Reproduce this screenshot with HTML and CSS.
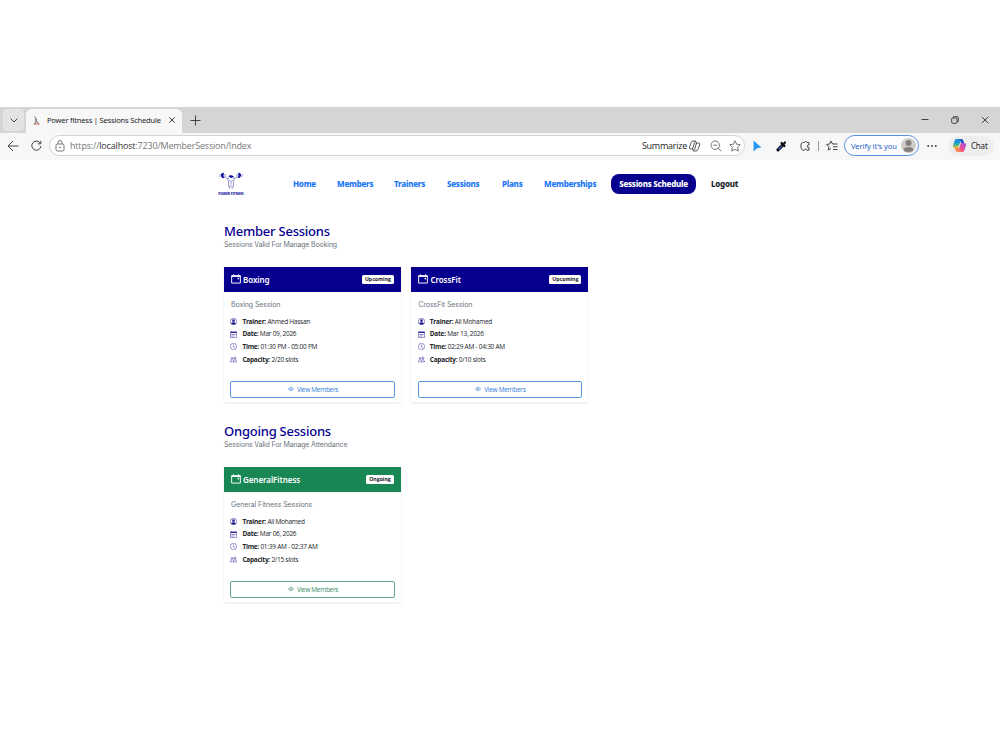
FILE: index.html
```html
<!DOCTYPE html>
<html lang="en">
<head>
  <meta charset="UTF-8">
  <title>Power fitness | Sessions Schedule</title>
  <link rel="stylesheet" href="styles.css">
</head>
<body>

<!-- Shared icons -->
<svg class="sprite" xmlns="http://www.w3.org/2000/svg">
  <symbol id="i-event" viewBox="0 0 16 16"><path d="M1 2.500h14v12H1zM1 4h14M4 .5v2M12 .5v2" fill="none" stroke="currentColor" stroke-width="1.500"/><path d="M10.500 6h2.500v2.500h-2.500z" fill="currentColor"/></symbol>
  <symbol id="i-person" viewBox="0 0 16 16"><circle cx="8" cy="8" r="7.300" fill="none" stroke="currentColor" stroke-width="1.200"/><circle cx="8" cy="6" r="3" fill="currentColor"/><path d="M2.500 13c1-2.500 3-3.500 5.500-3.500s4.500 1 5.500 3.500A8 8 0 0 1 2.500 13z" fill="currentColor"/></symbol>
  <symbol id="i-date" viewBox="0 0 16 16"><path d="M1 2h14v13H1zM4 0v2M12 0v2M3 8h10M3 11.500h7" fill="none" stroke="currentColor" stroke-width="1.200"/><path d="M1 2h14v2.500H1z" fill="currentColor"/></symbol>
  <symbol id="i-clock" viewBox="0 0 16 16"><path d="M8 3.500V9l3.500 2" fill="none" stroke="currentColor" stroke-width="1.100"/><circle cx="8" cy="8" r="7.200" fill="none" stroke="currentColor" stroke-width="1.100"/></symbol>
  <symbol id="i-people" viewBox="0 0 16 16"><g fill="none" stroke="currentColor" stroke-width="1.200"><circle cx="11" cy="5" r="2.500"/><circle cx="4.500" cy="5.500" r="2"/><path d="M7 13.500c0-3 1.500-4.500 4-4.500s4 1.500 4 4.500zM5.500 13.500H1c0-3 1-4.500 4.500-4.500"/></g></symbol>
  <symbol id="i-eye" viewBox="0 0 16 16"><g fill="none" stroke="currentColor" stroke-width="1.400"><path d="M.8 8C4.500 2 11.500 2 15.200 8 11.500 14 4.500 14 .8 8z"/><circle cx="8" cy="8" r="2.400"/></g></symbol>
</svg>

<div class="browser">
  <div class="tab-bar">
    <div class="tab-menu"><svg width="10" height="10" viewBox="0 0 10 10"><path d="M1.500 3.500 5 7l3.500-3.500"/></svg></div>
    <div class="tab">
      <svg class="favicon" width="9" height="10" viewBox="0 0 9 10"><path d="M2 1.500 4 3 3.500 5 6 8.500M4.500 4 3 9"/><path class="red" d="M5 6.500 7 9M1.500 9h6"/></svg>
      <span class="tab-title">Power fitness | Sessions Schedule</span>
      <svg width="8" height="8" viewBox="0 0 8 8"><path d="M1.300 1.300l5.400 5.400M6.700 1.300 1.300 6.700"/></svg>
    </div>
    <svg class="new-tab" width="11" height="11" viewBox="0 0 11 11"><path d="M5.500.5v10M.5 5.500h10"/></svg>
    <div class="window-buttons">
      <svg width="8" height="8" viewBox="0 0 8 8"><path d="M.5 3.500h7"/></svg>
      <svg width="8" height="8" viewBox="0 0 8 8"><rect x=".7" y="2" width="5.300" height="5.300" rx="1"/><path d="M2.500 1.800V.7h3.700q1.100 0 1.100 1.100v3.700H6.200"/></svg>
      <svg width="8" height="8" viewBox="0 0 8 8"><path d="M.8.8l6.400 6.400M7.200.8.8 7.200"/></svg>
    </div>
  </div>

  <div class="toolbar">
    <svg class="back" width="12" height="12" viewBox="0 0 12 12"><path d="M6 1 1 6l5 5M1 6h10.500"/></svg>
    <svg class="reload" width="11" height="11" viewBox="0 0 11 11"><path d="M9.500 3.500A4.600 4.600 0 1 0 10 6M9.800.8v3H6.800"/></svg>
    <div class="address">
      <svg width="10" height="12" viewBox="0 0 10 12"><rect x="1" y="4" width="8" height="7" rx="1.500"/><path d="M3 4V2.500a2 2 0 0 1 4 0V4"/><circle cx="5" cy="7.500" r=".5"/></svg>
      <span class="url">https://<b>localhost</b>:7230/MemberSession/Index</span>
      <span class="summarize">Summarize</span>
      <svg class="copilot-line" width="13" height="12" viewBox="0 0 13 12"><path d="M8.500 3.500 8 2Q7.700 1 6.500 1H5Q3.700 1 3.200 2.500L1.500 7Q1 9 2.800 9H4.500L6.500 2.500Q7 1 8 1M4.500 8.500 5 10q.3 1 1.500 1H8q1.300 0 1.800-1.500L11.700 5Q12.200 3 10.400 3H8.500L6.500 9.500Q6 11 5 11"/></svg>
      <svg class="zoom-out" width="12" height="12" viewBox="0 0 12 12"><circle cx="5.200" cy="5.200" r="4.200"/><path d="M3.200 5.200h4M8.300 8.300l3 3"/></svg>
      <svg width="12" height="12" viewBox="0 0 12 12"><path d="M6 .8l1.600 3.400 3.700.5-2.700 2.600.7 3.800L6 9.300l-3.300 1.800.7-3.800L.7 4.700l3.700-.5z"/></svg>
    </div>
    <svg class="pointer" width="9" height="12" viewBox="0 0 9 12"><path d="M.5.5 8.500 7.500 4.500 8 .5 11.500z"/></svg>
    <svg class="picker" width="11" height="12" viewBox="0 0 11 12"><path class="outline" d="M6.800 5 2 9.800"/><path class="barrel" d="M6 6 2.500 9.500"/><path class="tip" d="M7.500 4 9 2.500M5.500 3l3 3"/></svg>
    <svg class="extensions" width="11" height="12" viewBox="0 0 11 12"><path d="M2.500 2.500h1.800a1.400 1.400 0 0 1 2.700 0H9V5a1.300 1.300 0 1 0 0 2.500v2.700H7a1.400 1.400 0 0 0-2.700 0H2.500L1 7.800V4z"/></svg>
    <span class="divider"></span>
    <svg class="favorites" width="12" height="12" viewBox="0 0 12 12"><path d="M7.800 4H6.500L5 1 3.700 4 .7 4.400l2.200 2.200L2.300 10 5 8.500M7.500 4h4M7 6.800h4.500M7 9.500h4.500"/></svg>
    <div class="profile">
      <span>Verify it's you</span>
      <svg width="15" height="15" viewBox="0 0 15 15"><circle cx="7.500" cy="7.500" r="7.500" fill="#cfcdca"/><circle cx="7.500" cy="5" r="3" fill="#85807c"/><ellipse cx="7.500" cy="11.500" rx="4.800" ry="2.500" fill="#85807c"/></svg>
    </div>
    <svg class="more" width="10" height="4" viewBox="0 0 10 4"><circle cx="1.200" cy="2" r=".9"/><circle cx="5" cy="2" r=".9"/><circle cx="8.800" cy="2" r=".9"/></svg>
    <div class="chat">
      <svg width="15" height="15" viewBox="0 0 15 15"><defs><linearGradient id="g1" x2="0" y2="1"><stop stop-color="#1485e8"/><stop offset=".55" stop-color="#23a8b8"/><stop offset="1" stop-color="#f5c518"/></linearGradient><linearGradient id="g2" x1="1" x2="0" y2="1"><stop stop-color="#9a55ef"/><stop offset=".55" stop-color="#ee4b92"/><stop offset="1" stop-color="#ff963b"/></linearGradient></defs><path d="M4.500 1h5L6 10H3Q.3 10 1 7.500L2.500 3Q3 1 4.500 1z" fill="url(#g1)"/><path d="M9 5H12q2.700 0 2 2.500L12.500 12q-.5 2-2 2h-5z" fill="url(#g2)"/><path d="M8 1h1.500Q11 1 11.500 3l.6 2H9z" fill="#1b56c9"/><path d="M3 10h3.700l-1.200 4Q4 14 3.600 12z" fill="#ff7a3d"/></svg>
      <span>Chat</span>
    </div>
  </div>
</div>

<nav class="site-nav">
  <div class="logo">
    <svg width="24" height="20" viewBox="0 0 24 20">
      <path d="M5 .8Q1.800 1 2 3.500 2.200 6 5 6.200 3.800 3.500 5 .8zM19 .8q3.200.2 3 2.700-.2 2.500-3 2.700 1.200-2.700 0-5.400z" fill="#08089a"/>
      <path d="M1 2v3M23 2v3M6 2v4M18 2v4M6 4.500 8 6.500 10 6M18 4.500 16 6.500 14 6M8 6l1.500 3v4l1.500 4M16 6 14.500 9v5L13 17M10 8l2 1.500L14 8M12 10v3M10 13.500l2 1.500 1.500-1" fill="none" stroke="#5d59b5" stroke-width=".6"/>
      <path d="M9.500 4.500Q10 3 12 3.200L14.500 4v1.300L12 6z" fill="#08089a"/>
    </svg>
    <span>POWER FITNESS</span>
  </div>
  <a class="home">Home</a>
  <a class="members">Members</a>
  <a class="trainers">Trainers</a>
  <a class="sessions">Sessions</a>
  <a class="plans">Plans</a>
  <a class="memberships">Memberships</a>
  <a class="active">Sessions Schedule</a>
  <a class="logout">Logout</a>
</nav>

<main class="container">
  <section>
    <h2>Member Sessions</h2>
    <p class="subtitle">Sessions Valid For Manage Booking</p>
    <div class="cards">
      <div class="card">
        <div class="card-header">
          <svg><use href="#i-event"/></svg><h5>Boxing</h5><span class="badge">Upcoming</span>
        </div>
        <div class="card-body">
          <p class="description">Boxing Session</p>
          <ul>
            <li><svg><use href="#i-person"/></svg><b>Trainer:</b> Ahmed Hassan</li>
            <li><svg><use href="#i-date"/></svg><b>Date:</b> Mar 09, 2026</li>
            <li><svg><use href="#i-clock"/></svg><b>Time:</b> 01:30 PM - 05:00 PM</li>
            <li><svg><use href="#i-people"/></svg><b>Capacity:</b> 2/20 slots</li>
          </ul>
          <a class="btn"><svg><use href="#i-eye"/></svg>View Members</a>
        </div>
      </div>
      <div class="card">
        <div class="card-header">
          <svg><use href="#i-event"/></svg><h5>CrossFit</h5><span class="badge">Upcoming</span>
        </div>
        <div class="card-body">
          <p class="description">CrossFit Session</p>
          <ul>
            <li><svg><use href="#i-person"/></svg><b>Trainer:</b> Ali Mohamed</li>
            <li><svg><use href="#i-date"/></svg><b>Date:</b> Mar 13, 2026</li>
            <li><svg><use href="#i-clock"/></svg><b>Time:</b> 02:29 AM - 04:30 AM</li>
            <li><svg><use href="#i-people"/></svg><b>Capacity:</b> 0/10 slots</li>
          </ul>
          <a class="btn"><svg><use href="#i-eye"/></svg>View Members</a>
        </div>
      </div>
    </div>
  </section>

  <section>
    <h2>Ongoing Sessions</h2>
    <p class="subtitle">Sessions Valid For Manage Attendance</p>
    <div class="cards">
      <div class="card ongoing">
        <div class="card-header">
          <svg><use href="#i-event"/></svg><h5>GeneralFitness</h5><span class="badge">Ongoing</span>
        </div>
        <div class="card-body">
          <p class="description">General Fitness Sessions</p>
          <ul>
            <li><svg><use href="#i-person"/></svg><b>Trainer:</b> Ali Mohamed</li>
            <li><svg><use href="#i-date"/></svg><b>Date:</b> Mar 06, 2026</li>
            <li><svg><use href="#i-clock"/></svg><b>Time:</b> 01:39 AM - 02:37 AM</li>
            <li><svg><use href="#i-people"/></svg><b>Capacity:</b> 2/15 slots</li>
          </ul>
          <a class="btn"><svg><use href="#i-eye"/></svg>View Members</a>
        </div>
      </div>
    </div>
  </section>
</main>

</body>
</html>
```
FILE: styles.css
```css
* {
  box-sizing: border-box;
}
body {
  margin: 0;
  padding-top: 107px;
  height: 750px;
  overflow: hidden;
  background: #fff;
  color: #212529;
  font-family: "Open Sans", "Noto Sans", sans-serif;
}
h2, h5, p, ul {
  margin: 0;
  padding: 0;
}
svg {
  flex: none;
}
.sprite {
  display: none;
}

/* Browser window */
.browser svg {
  fill: none;
  stroke: #444;
  stroke-width: 1;
}
.tab-bar {
  display: flex;
  align-items: center;
  height: 26px;
  background: #d5d5d5;
}
.tab-menu {
  display: flex;
  align-items: center;
  justify-content: center;
  width: 21px;
  height: 22px;
  margin-left: 3px;
  border-radius: 4px;
  background: #e3e3e3;
}
.tab {
  display: flex;
  align-items: center;
  width: 156px;
  height: 24px;
  margin: 2px 0 0 2px;
  padding: 0 0 2px 6px;
  border-radius: 6px 6px 0 0;
  background: #f7f7f7;
}
.tab .favicon {
  stroke: #777;
}
.tab .favicon .red {
  stroke: #b9705c;
}
.tab-title {
  width: 121px;
  margin-left: 6px;
  font-family: "Noto Sans", sans-serif;
  font-size: 7.6px;
  line-height: 12px;
  letter-spacing: -0.22px;
  white-space: nowrap;
}
.new-tab {
  margin-left: 8px;
}
.window-buttons {
  display: flex;
  gap: 22px;
  margin-left: auto;
  padding-right: 11px;
}
.toolbar {
  display: flex;
  align-items: center;
  height: 27px;
  padding-bottom: 2px;
  background: #f7f7f7;
}
.back {
  margin-left: 7px;
}
.reload {
  margin-left: 12px;
}
.address {
  display: flex;
  align-items: center;
  width: 696px;
  height: 21px;
  margin-left: 7px;
  padding-left: 5px;
  border: 1px solid #d3d3d3;
  border-radius: 11px;
  background: #fff;
}
.browser .address svg {
  stroke: #666;
  stroke-width: 0.9;
}
.url {
  margin-left: 5px;
  color: #777;
  font-size: 9px;
  letter-spacing: -0.18px;
}
.url b {
  color: #333;
  font-weight: 400;
}
.summarize {
  margin-left: auto;
  font-size: 9px;
  letter-spacing: -0.25px;
}
.address .copilot-line {
  margin-left: 1px;
}
.browser .address .copilot-line {
  stroke: #444;
}
.zoom-out {
  margin: 0 7px 0 9px;
}
.address > svg:last-child {
  margin-right: 3px;
}
.browser .pointer {
  margin-left: 8px;
  fill: #2899f5;
  stroke: none;
}
.picker {
  margin-left: 14px;
}
.picker .outline {
  stroke: #111;
  stroke-width: 3.2;
  stroke-linecap: round;
}
.picker .barrel {
  stroke: #4456c4;
  stroke-width: 1.2;
}
.picker .tip {
  stroke: #111;
  stroke-width: 2.2;
  stroke-linecap: round;
}
.extensions {
  margin-left: 13px;
}
.divider {
  width: 1px;
  height: 10px;
  margin: 0 7px;
  background: #999;
}
.profile {
  display: flex;
  align-items: center;
  justify-content: space-between;
  width: 75px;
  height: 21px;
  margin-left: 6px;
  padding: 0 2px 0 6px;
  border: 1px solid #5a8fe0;
  border-radius: 11px;
  background: #fdfdff;
  color: #2865c8;
  font-family: "Noto Sans", sans-serif;
  font-size: 7.6px;
  letter-spacing: -0.1px;
  white-space: nowrap;
}
.browser .profile svg,
.browser .chat svg {
  stroke: none;
}
.browser .more {
  margin-left: 8px;
  fill: #333;
  stroke: none;
}
.chat {
  display: flex;
  align-items: center;
  gap: 4px;
  width: 46px;
  height: 20px;
  margin-left: 11px;
  padding-left: 4px;
  border-radius: 10px;
  background: #eee;
  font-family: "Noto Sans", sans-serif;
  font-size: 8px;
  letter-spacing: -0.2px;
}

/* Site navigation */
.site-nav {
  display: flex;
  align-items: center;
  height: 47px;
  padding-left: 218px;
  font-family: "Noto Sans", sans-serif;
  font-size: 8px;
  font-weight: 800;
  letter-spacing: -0.25px;
  color: #1a75f5;
}
.logo {
  display: flex;
  flex-direction: column;
  align-items: center;
  width: 26px;
  height: 24px;
  margin-right: 49px;
  color: #08089a;
  font-size: 3.2px;
  letter-spacing: 0;
  line-height: 5px;
  white-space: nowrap;
}
.site-nav a {
  white-space: nowrap;
}
.site-nav .home {
  width: 44px;
}
.site-nav .members {
  width: 57px;
}
.site-nav .trainers {
  width: 53px;
}
.site-nav .sessions {
  width: 55px;
}
.site-nav .plans {
  width: 42px;
}
.site-nav .memberships {
  width: 67px;
}
.site-nav .active {
  width: 85px;
  margin-right: 15px;
  border-radius: 8px;
  background: #07008f;
  color: #fff;
  line-height: 20px;
  text-align: center;
}
.site-nav .logout {
  color: #212529;
}

/* Session lists */
.container {
  width: 552px;
  margin: 17px auto 0;
}
section {
  height: 200px;
}
h2 {
  color: #07008f;
  font-family: "Noto Sans", sans-serif;
  font-size: 13px;
  font-weight: 500;
  line-height: 15px;
  letter-spacing: -0.23px;
}
.subtitle {
  color: #6c757d;
  font-family: Inter, sans-serif;
  font-size: 7px;
  line-height: 11px;
  letter-spacing: -0.15px;
}
.cards {
  display: flex;
  gap: 10.4px;
  margin-top: 17px;
}
.card {
  width: 177px;
  height: 135px;
  background: #fff;
  box-shadow: 0 1px 2px rgba(0,0,0,0.1);
}
.card-header {
  display: flex;
  align-items: center;
  height: 25px;
  padding: 0 7px;
  background: #07008f;
  color: #fff;
}
.card-header svg {
  width: 10px;
  height: 10px;
  margin: -2px 2px 0 0;
}
.card-header h5 {
  font-family: "Noto Sans", sans-serif;
  font-size: 8px;
  font-weight: 600;
  line-height: 12px;
  letter-spacing: -0.06px;
}
.badge {
  width: 32px;
  height: 9px;
  margin-left: auto;
  border-radius: 1.5px;
  background: #fff;
  color: #212529;
  font-size: 5.2px;
  font-weight: 700;
  line-height: 9px;
  text-align: center;
}
.card-body {
  padding: 7.5px 6.4px;
}
.description {
  padding-left: 0.6px;
  color: #6c757d;
  font-family: Inter, sans-serif;
  font-size: 7px;
  line-height: 10px;
  letter-spacing: -0.08px;
}
ul {
  margin-top: 6px;
  list-style: none;
}
li {
  height: 12.9px;
  font-size: 6.5px;
  line-height: 12.9px;
  letter-spacing: -0.25px;
  white-space: nowrap;
}
li svg {
  width: 7px;
  height: 7px;
  margin-right: 5px;
  color: #2a2499;
  vertical-align: -1.2px;
}
.btn {
  display: flex;
  align-items: center;
  justify-content: center;
  height: 17px;
  margin-top: 14px;
  padding: 0 0 1px 1px;
  border: 1px solid #5f9bdc;
  border-radius: 2px;
  color: #2f7edb;
  font-size: 6.5px;
  letter-spacing: -0.3px;
}
.btn svg {
  width: 6px;
  height: 6px;
  margin-right: 3px;
}
.ongoing .card-header {
  background: #198754;
}
.ongoing .badge {
  width: 28px;
}
.ongoing .btn {
  border-color: #65aa8b;
  color: #3a8b68;
}
```
